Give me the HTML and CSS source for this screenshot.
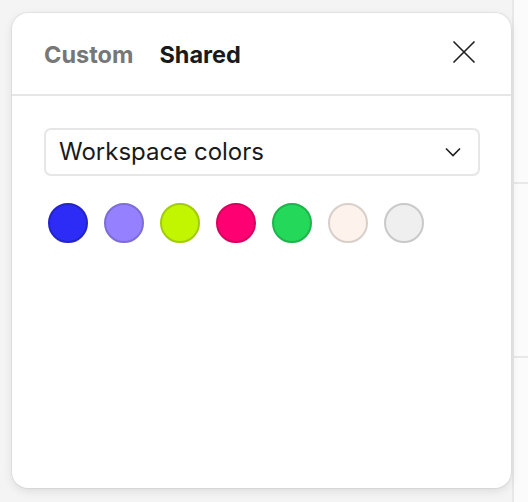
FILE: index.html
```html
<!DOCTYPE html>
<html>
<head>
<meta charset="utf-8">
<link rel="stylesheet" href="styles.css">
</head>
<body>
<div class="page">
  <div class="stage">
    <div class="panel">
      <div class="header">
        <div class="tabs">
          <span class="tab">Custom</span>
          <span class="tab active">Shared</span>
        </div>
        <button class="close" aria-label="Close">
          <svg width="24" height="24" viewBox="0 0 24 24"><path d="M1.5 1.5 L22.5 22.5 M22.5 1.5 L1.5 22.5" stroke="#1e1e1e" stroke-width="1.6" fill="none"/></svg>
        </button>
      </div>
      <div class="body">
        <div class="select">
          <span>Workspace colors</span>
          <svg width="16" height="10" viewBox="0 0 16 10"><path d="M1 1.5 L8 8.5 L15 1.5" stroke="#1e1e1e" stroke-width="1.6" fill="none"/></svg>
        </div>
        <div class="swatches">
          <span class="swatch s1"></span>
          <span class="swatch s2"></span>
          <span class="swatch s3"></span>
          <span class="swatch s4"></span>
          <span class="swatch s5"></span>
          <span class="swatch s6"></span>
          <span class="swatch s7"></span>
        </div>
      </div>
    </div>
  </div>
  <div class="side">
    <div class="side-row r1"></div>
    <div class="side-row r2"></div>
    <div class="side-row r3"></div>
  </div>
</div>
</body>
</html>
```
FILE: styles.css
```css
* { box-sizing: border-box; }
html, body { margin: 0; padding: 0; }
body {
  font-family: Inter, "Noto Sans", sans-serif;
  background: #f4f4f4;
  width: 528px;
  height: 502px;
  overflow: hidden;
}
.page {
  display: flex;
  height: 502px;
}
.stage {
  width: 512px;
  padding: 13px 0 0 12px;
  flex: none;
  position: relative;
  z-index: 1;
}
.panel {
  width: 499px;
  height: 475px;
  background: #fff;
  border-radius: 16px;
  box-shadow: 0 0 0 1px rgba(0,0,0,0.05), 0 3px 10px rgba(0,0,0,0.10);
  display: flex;
  flex-direction: column;
}
.header {
  height: 83px;
  border-bottom: 2px solid #e6e6e6;
  display: flex;
  align-items: center;
  justify-content: space-between;
  padding: 0 35px 0 32px;
}
.tabs {
  display: flex;
  gap: 26px;
  padding-top: 1px;
}
.tab {
  font-size: 23.5px;
  font-weight: 700;
  color: #777;
}
.tab.active { color: #1a1a1a; }
.close {
  border: 0;
  background: none;
  padding: 0;
  width: 24px;
  height: 24px;
  display: flex;
  margin-bottom: 3px;
}
.body {
  padding: 32px 31px 0 32px;
}
.select {
  height: 48px;
  border: 2px solid #e6e6e6;
  border-radius: 7px;
  display: flex;
  align-items: center;
  justify-content: space-between;
  padding: 0 17px 0 13px;
  font-size: 24px;
  color: #1a1a1a;
}
.select span { padding-bottom: 1px; }
.swatches {
  display: flex;
  gap: 16px;
  padding: 27px 4px 0;
}
.swatch {
  width: 40px;
  height: 40px;
  border-radius: 50%;
  border: 2px solid;
  flex: none;
}
.s1 { background: #2c2cf6; border-color: #2424c8; }
.s2 { background: #9580ff; border-color: #7d6ed6; }
.s3 { background: #c2f500; border-color: #a2cc0a; }
.s4 { background: #ff0073; border-color: #d8005f; }
.s5 { background: #24d95a; border-color: #1eb44c; }
.s6 { background: #fdf3ec; border-color: #d8cfca; }
.s7 { background: #efefef; border-color: #c9c9c9; }
.side {
  flex: 1;
  background: #fbfbfb;
  border-left: 2px solid #e8e8e8;
  display: flex;
  flex-direction: column;
}
.side-row { border-bottom: 2px solid #e8e8e8; }
.r1 { height: 184px; }
.r2 { height: 174px; }
.r3 { flex: 1; border-bottom: 0; }
```
